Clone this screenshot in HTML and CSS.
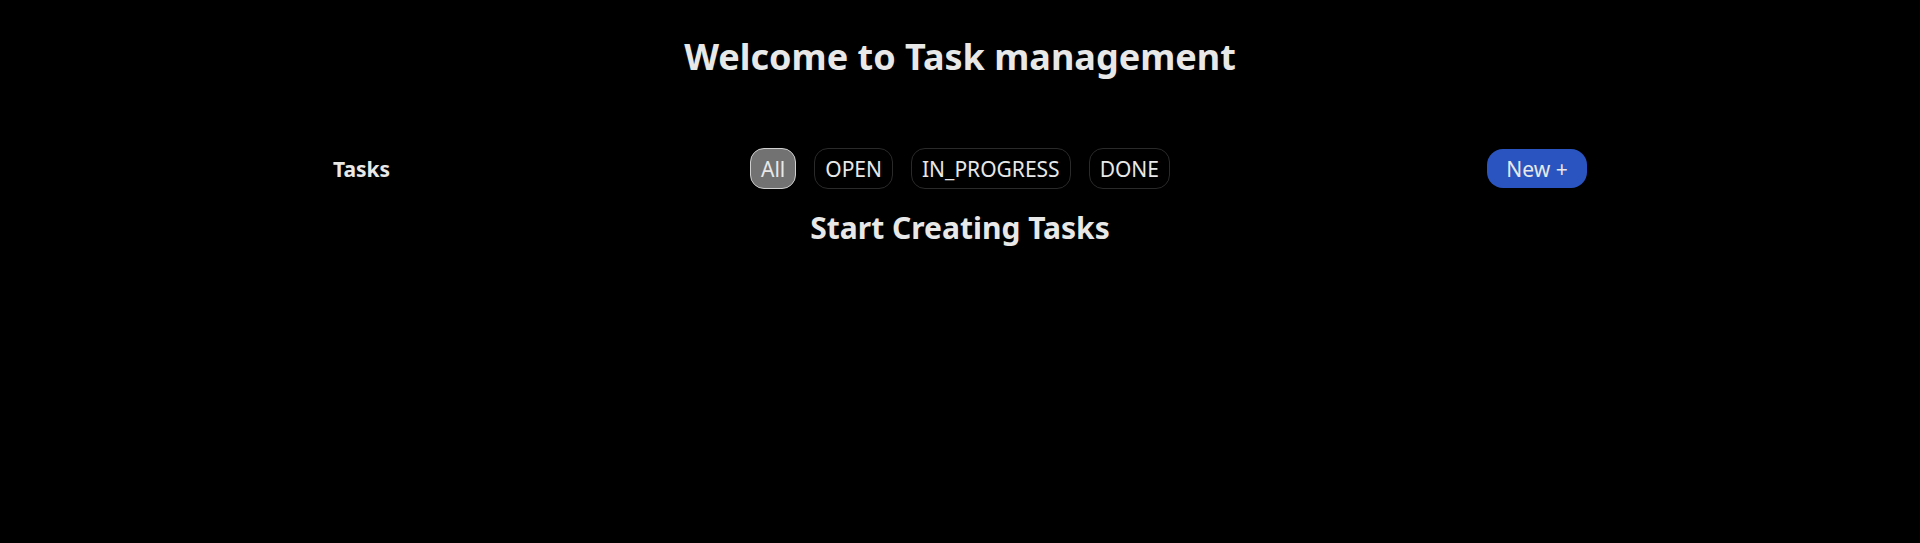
FILE: index.html
```html
<!DOCTYPE html>
<html lang="en">
<head>
<meta charset="utf-8">
<title>Task management</title>
<link rel="stylesheet" href="styles.css">
</head>
<body>
<main class="app">
  <h1 class="title">Welcome to Task management</h1>
  <section class="board">
    <div class="toolbar">
      <h2 class="toolbar-label">Tasks</h2>
      <div class="filters">
        <button class="pill pill-active">All</button>
        <button class="pill">OPEN</button>
        <button class="pill">IN_PROGRESS</button>
        <button class="pill">DONE</button>
      </div>
      <div class="actions">
        <button class="new-btn">New +</button>
      </div>
    </div>
    <h2 class="empty">Start Creating Tasks</h2>
  </section>
</main>
</body>
</html>
```

FILE: styles.css
```css
html, body {
  margin: 0;
  padding: 0;
  background: #000;
  color: #e8e8e8;
  font-family: "Noto Sans", "Open Sans", sans-serif;
}

.app {
  display: flex;
  flex-direction: column;
  align-items: center;
}

.title {
  margin: 30px 0 0;
  font-size: 36px;
  font-weight: 700;
  line-height: 54px;
}

.board {
  width: 1254px;
  margin-top: 64px;
  display: flex;
  flex-direction: column;
}

.toolbar {
  display: grid;
  grid-template-columns: 1fr auto 1fr;
  align-items: center;
}

.toolbar-label {
  margin: 0;
  font-size: 21px;
  font-weight: 700;
}

.filters {
  display: flex;
  gap: 18px;
}

.pill {
  font-family: inherit;
  font-size: 21px;
  color: #e8e8e8;
  background: #000;
  border: 1px solid #2a2a2a;
  border-radius: 14px;
  height: 41px;
  padding: 0 10px;
  cursor: pointer;
}

.pill-active {
  background: #727272;
  border-color: #cfcfcf;
}

.actions {
  display: flex;
  justify-content: flex-end;
}

.new-btn {
  font-family: inherit;
  font-size: 21px;
  color: #e8e8e8;
  background: #2a55c0;
  border: none;
  border-radius: 16px;
  height: 39px;
  width: 100px;
  cursor: pointer;
}

.empty {
  margin: 18px 0 0;
  text-align: center;
  font-size: 30px;
  font-weight: 700;
}
```
